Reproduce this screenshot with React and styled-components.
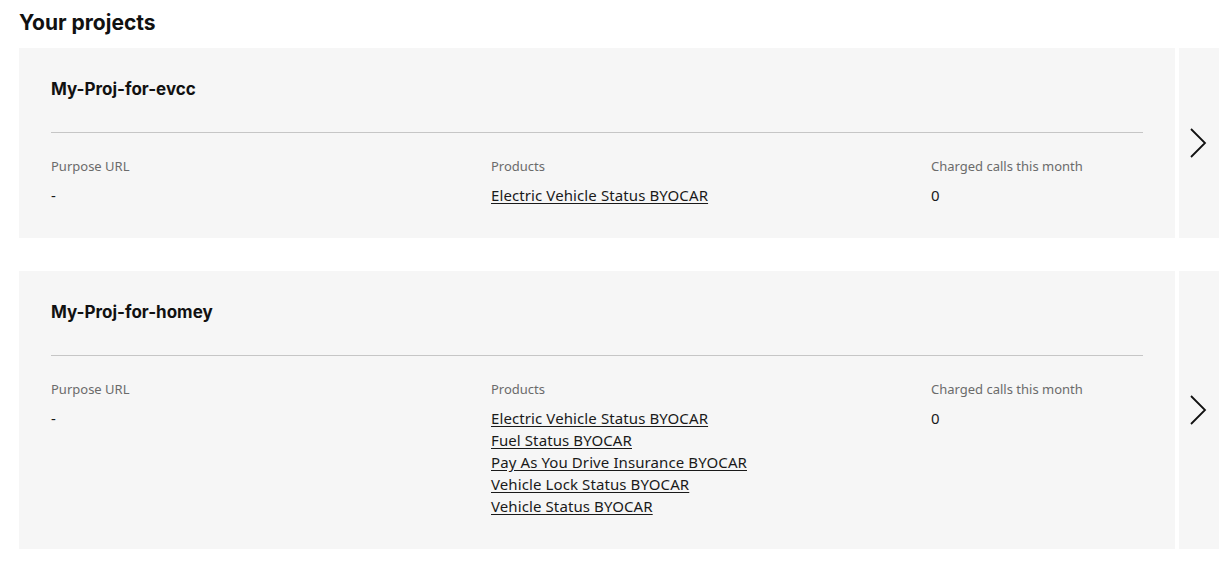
import React from 'react';
import styled, { createGlobalStyle } from 'styled-components';

const GlobalStyle = createGlobalStyle`
	body {
		margin: 0;
		background: #fff;
		color: #1a1a1a;
		font-family: 'Noto Sans', sans-serif;
	}
`;

const projects = [
	{
		name: 'My-Proj-for-evcc',
		purposeUrl: '-',
		products: ['Electric Vehicle Status BYOCAR'],
		calls: 0,
	},
	{
		name: 'My-Proj-for-homey',
		purposeUrl: '-',
		products: [
			'Electric Vehicle Status BYOCAR',
			'Fuel Status BYOCAR',
			'Pay As You Drive Insurance BYOCAR',
			'Vehicle Lock Status BYOCAR',
			'Vehicle Status BYOCAR',
		],
		calls: 0,
	},
];

const Chevron = () => (
	<svg width="18" height="32" viewBox="0 0 18 32" fill="none">
		<path d="M2 2 L16 16 L2 30" stroke="#111" strokeWidth="1.8" />
	</svg>
);

export default function App() {
	return (
		<>
			<GlobalStyle />
			<Page>
				<Heading>Your projects</Heading>
				<List>
					{projects.map((project) => (
						<Row key={project.name}>
							<Card>
								<Title>{project.name}</Title>
								<Divider />
								<Columns>
									<Column>
										<Label>Purpose URL</Label>
										<Value>{project.purposeUrl}</Value>
									</Column>
									<Column>
										<Label>Products</Label>
										{project.products.map((p) => (
											<ProductLink key={p} href="#">
												{p}
											</ProductLink>
										))}
									</Column>
									<Column>
										<Label>Charged calls this month</Label>
										<Value>{project.calls}</Value>
									</Column>
								</Columns>
							</Card>
							<ArrowButton aria-label="Open project">
								<Chevron />
							</ArrowButton>
						</Row>
					))}
				</List>
			</Page>
		</>
	);
}

const Page = styled.div`
	padding: 11px 11px 0 19px;
`;

const Heading = styled.h2`
	margin: 0 0 13px;
	font-family: Inter, 'Liberation Sans', sans-serif;
	font-size: 21px;
	line-height: 24px;
	font-weight: 700;
	color: #111;
`;

const List = styled.div`
	display: flex;
	flex-direction: column;
	gap: 33px;
`;

const Row = styled.div`
	display: flex;
	gap: 4px;
`;

const Card = styled.div`
	flex: 1;
	background: #f6f6f6;
	padding: 29px 32px 32px;
`;

const Title = styled.h3`
	margin: 0;
	font-family: Inter, 'Liberation Sans', sans-serif;
	font-size: 17px;
	line-height: 24px;
	font-weight: 700;
	color: #111;
`;

const Divider = styled.hr`
	margin: 31px 0 0;
	border: 0;
	height: 1px;
	background: #c6c6c6;
`;

const Columns = styled.div`
	display: grid;
	grid-template-columns: 440px 440px 1fr;
	padding-top: 24px;
`;

const Column = styled.div`
	display: flex;
	flex-direction: column;
	align-items: flex-start;
`;

const Label = styled.div`
	font-size: 13px;
	line-height: 18px;
	color: #6b6b6b;
	margin-bottom: 9px;
`;

const Value = styled.div`
	font-size: 15px;
	line-height: 22px;
	color: #1a1a1a;
`;

const ProductLink = styled.a`
	font-size: 15px;
	line-height: 22px;
	letter-spacing: 0.1px;
	color: #1a1a1a;
	text-decoration: underline;
	text-underline-offset: 2px;
`;

const ArrowButton = styled.button`
	width: 40px;
	flex: none;
	border: 0;
	padding: 0 2px 0 0;
	background: #f6f6f6;
	display: flex;
	align-items: center;
	justify-content: center;
	cursor: pointer;
`;
